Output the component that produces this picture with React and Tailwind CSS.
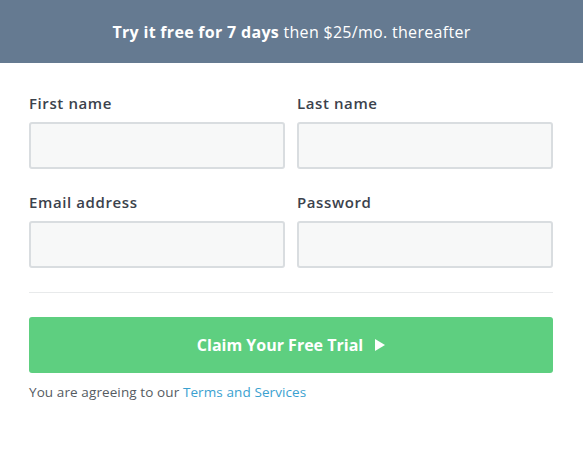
export default function App() {
  const label = "text-[15px] font-semibold tracking-[0.6px] text-[#3b424c] h-[20px] leading-[20px]";
  const input = "mt-[9px] h-[47px] rounded-[3px] border-2 border-[#d9dde0] bg-[#f7f8f8]";
  return (
    <div className="w-[583px] h-[451px] bg-white font-['Open_Sans',sans-serif]">
      <div className="h-[63px] bg-[#657a91] flex items-center justify-center text-white text-[16px] tracking-[0.3px]">
        <span><b className="font-bold">Try it free for 7 days</b> then $25/mo. thereafter</span>
      </div>
      <div className="pl-[29px] pr-[30px]">
        <div className="grid grid-cols-2 gap-x-[12px] pt-[30px]">
          <div>
            <div className={label}>First name</div>
            <div className={input} />
          </div>
          <div>
            <div className={label}>Last name</div>
            <div className={input} />
          </div>
          <div className="mt-[23px]">
            <div className={label}>Email address</div>
            <div className={input} />
          </div>
          <div className="mt-[23px]">
            <div className={label}>Password</div>
            <div className={input} />
          </div>
        </div>
        <div className="mt-[24px] border-t border-[#e8eaeb]" />
        <button className="mt-[24px] w-full h-[56px] rounded-[3px] bg-[#5ecf80] text-white text-[16px] font-bold flex items-center justify-center gap-[12px]">
          <span>Claim Your Free Trial</span>
          <svg width="10" height="12" viewBox="0 0 10 12"><path d="M0 0 L10 6 L0 12 Z" fill="white" /></svg>
        </button>
        <div className="mt-[10px] text-[13.5px] leading-[18px] tracking-[0.1px] text-[#555b62]">
          You are agreeing to our <span className="text-[#3aa1d0]">Terms and Services</span>
        </div>
      </div>
    </div>
  );
}
